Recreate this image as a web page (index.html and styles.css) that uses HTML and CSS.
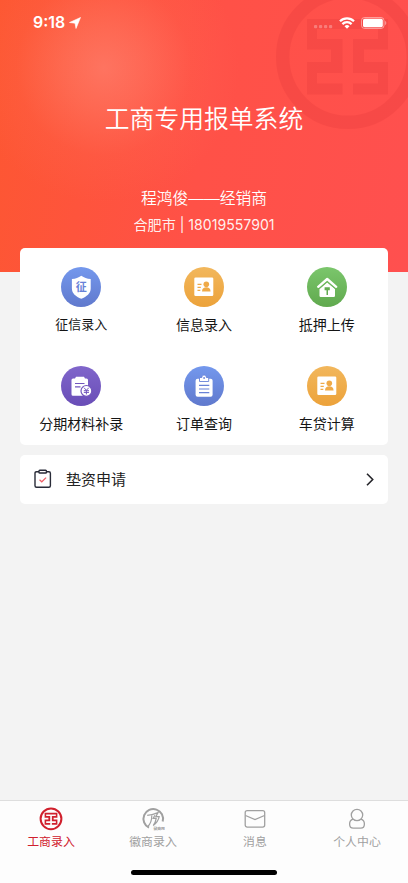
FILE: index.html
```html
<!DOCTYPE html>
<html lang="zh-CN">
<head>
<meta charset="utf-8">
<meta name="viewport" content="width=device-width, initial-scale=1">
<title>工商专用报单系统</title>
<link rel="stylesheet" href="styles.css">
</head>
<body>
<svg class="defs" width="0" height="0" aria-hidden="true">
  <defs>
    <path id="emblem" d="M32 35H113V65.5H89V78H113V110.5H78V99.5H103V89H78V55H103V45H42V55H67.5V89H42V99.5H67.5V110.5H32V78H56V65.5H32Z"/>
    <g id="card">
      <rect x="10.3" y="10.5" width="19" height="18.5" rx="1.3" fill="#fff"/>
      <path d="M13.5 17.3h4M13.5 20.3h3.3M13.5 23.4h2.8" stroke="#efaa48" stroke-width="1.2"/>
      <circle cx="22.3" cy="17.3" r="2.8" fill="#efaa48"/>
      <path d="M18 24.500c0-3 2-4.200 4.300-4.200s4.300 1.200 4.300 4.200z" fill="#efaa48"/>
    </g>
  </defs>
</svg>
<div class="app">
  <header class="hero">
    <svg class="watermark" viewBox="0 0 146 146">
      <circle cx="73" cy="73" r="65.3" fill="none" stroke="currentColor" stroke-width="13.4"/>
      <use href="#emblem" fill="currentColor"/>
    </svg>
    <div class="status">
      <div class="clock"><span>9:18</span>
        <svg width="12" height="12" viewBox="0 0 12 12"><path d="M11.500.5 7 11.500 6 6.200.5 5.500z" fill="#fff" stroke="#fff" stroke-width=".6" stroke-linejoin="round"/></svg>
      </div>
      <div class="signals">
        <svg class="dots" width="20" height="4" viewBox="0 0 20 4"><g fill="#fff" opacity=".28"><rect x="1" width="3.2" height="3.2" rx="1"/><rect x="6" width="3.2" height="3.2" rx="1"/><rect x="11" width="3.2" height="3.2" rx="1"/><rect x="16" width="3.2" height="3.2" rx="1"/></g></svg>
        <svg width="16" height="12" viewBox="0 0 16 12"><g fill="none" stroke="#fff" stroke-width="2.200"><path d="M1 4.200a10 10 0 0 1 14 0M3.400 7.100a6.500 6.500 0 0 1 9.200 0"/></g><path d="M5.500 9.200a3.600 3.600 0 0 1 5 0L8 11.800z" fill="#fff"/></svg>
        <svg width="26" height="12" viewBox="0 0 26 12"><rect x=".5" y=".5" width="22.5" height="11" rx="3" fill="none" stroke="#fff" opacity=".45"/><rect x="2" y="1.800" width="19.800" height="8.400" rx="1.600" fill="#fff"/><path d="M24.2 4c1.4.4 1.4 3.6 0 4z" fill="#fff" opacity=".5"/></svg>
      </div>
    </div>
    <h1>工商专用报单系统</h1>
    <p class="name">程鸿俊——经销商</p>
    <p class="phone">合肥市 | 18019557901</p>
  </header>
  <main>
    <section class="menu">
      <a class="item small"><span class="disc blue"><svg viewBox="0 0 40 40"><path d="M20.3 8.8c3 2 5.500 3 9.400 3.200v9.500c0 5-4 8-9.400 10.300-5.400-2.300-9.400-5.300-9.400-10.300V12c3.900-.2 6.400-1.200 9.400-3.200z" fill="#fff"/><text x="20.300" y="24.300" text-anchor="middle" class="seal">征</text></svg></span>征信录入</a>
      <a class="item"><span class="disc orange"><svg viewBox="0 0 40 40"><use href="#card"/></svg></span>信息录入</a>
      <a class="item"><span class="disc green"><svg viewBox="0 0 40 40"><path d="M20.200 15.500 28 22v6.800q0 1.200-1.200 1.200H13.700q-1.200 0-1.200-1.200V22z" fill="#fff"/><path d="m11.200 19.800 9-7.800 9 7.800" fill="none" stroke="#fff" stroke-width="2.400" stroke-linecap="round" stroke-linejoin="round"/><path d="m12.500 21.500 7.700-6.700 7.700 6.700" fill="none" stroke="#6bb65b" stroke-width=".7"/><path d="M17.600 20.300h5.200v3h-5.200zM19.500 23h1.500v5h-1.500z" fill="#62ac51"/></svg></span>抵押上传</a>
      <a class="item"><span class="disc purple"><svg viewBox="0 0 40 40"><path d="M10.500 14q0-1.500 1.500-1.500h2l1-1.700h8l1 1.700h1.500q1.500 0 1.500 1.500v15.700H12q-1.500 0-1.500-1.500z" fill="#fff"/><path d="M14 17.500h9.500M14 20.800h5.500" stroke="#7256bd" stroke-width="1.200"/><circle cx="25.400" cy="24.900" r="5.400" fill="#fff" stroke="#7256bd" stroke-width="1.200"/><path d="m23 21.700 2.400 2.600 2.400-2.600M22.800 24.700H28M22.800 26.400H28M25.400 24.300v4.100" fill="none" stroke="#7256bd" stroke-width="1"/></svg></span>分期材料补录</a>
      <a class="item"><span class="disc blue"><svg viewBox="0 0 40 40"><rect x="11.600" y="12.700" width="17" height="18" rx="2" fill="#fff"/><path d="M15.500 11.500h2.300c.4-3.300 4.200-3.300 4.600 0h2.300v4h-9.200z" fill="#fff" stroke="#6882d7" stroke-width=".9"/><circle cx="20.100" cy="12" r=".9" fill="#6882d7"/><path d="M15 19.300h10.300M15 23h10.300M15 26.700h10.300" stroke="#6882d7" stroke-width="1.200"/></svg></span>订单查询</a>
      <a class="item"><span class="disc orange"><svg viewBox="0 0 40 40"><use href="#card"/></svg></span>车贷计算</a>
    </section>
    <a class="row">
      <svg width="18" height="20" viewBox="0 0 18 20"><g fill="none" stroke="#292b38" stroke-width="1.400"><path d="M5 2.700H2.500q-1.500 0-1.500 1.500v12.600q0 1.500 1.500 1.500h12.400q1.500 0 1.500-1.500V4.200q0-1.500-1.500-1.500h-2.500"/><rect x="5" y="1.200" width="7.400" height="2.800" rx=".8"/></g><path d="m5.500 10.700 2.300 2.100 4.300-4.200" fill="none" stroke="#ef6068" stroke-width="1.200"/></svg>
      <span>垫资申请</span>
      <svg class="chevron" width="8" height="13" viewBox="0 0 8 13"><path d="m1 .8 5.700 5.700L1 12.200" fill="none" stroke="#26262b" stroke-width="1.600"/></svg>
    </a>
  </main>
  <nav class="tabs">
    <a class="tab active"><svg viewBox="0 0 24 24"><circle cx="12" cy="11.800" r="10.400" fill="none" stroke="currentColor" stroke-width="2"/><use href="#emblem" fill="currentColor" transform="translate(.55 .3) scale(.158)"/></svg>工商录入</a>
    <a class="tab"><svg viewBox="0 0 24 24"><path d="M8 20.700A9.800 9.800 0 1 1 21.700 14.500" fill="none" stroke="currentColor" stroke-width="2"/><path d="M6.200 8.300c4.300 0 6.300-.8 10.800-2.700l-2.200 4h3.400c-.8 4-3 6.700-6 9 1.800-2.700 2.700-4.600 3-7.200h-3l1.600-3.200M10.800 8.500c0 4-1.300 8.300-4 11" fill="none" stroke="currentColor" stroke-width="1.200"/><text x="12.500" y="22.600" class="tiny">徽商网</text></svg>徽商录入</a>
    <a class="tab"><svg viewBox="0 0 24 24"><rect x="2.200" y="3.600" width="19.500" height="16.500" rx="2" fill="none" stroke="currentColor" stroke-width="1.300"/><path d="m2.500 8.500 9.500 4 9.500-4" fill="none" stroke="currentColor" stroke-width="1.300"/></svg>消息</a>
    <a class="tab"><svg viewBox="0 0 24 24"><g fill="none" stroke="currentColor" stroke-width="1.300"><circle cx="12" cy="8" r="5.700"/><path d="M8 12.200c-2.300.8-3.400 2.400-3.400 4.800 0 2.700 1.300 4.200 3.700 4.200h7.400c2.400 0 3.700-1.500 3.700-4.200 0-2.400-1.100-4-3.400-4.800"/></g></svg>个人中心</a>
    <span class="home"></span>
  </nav>
</div>
</body>
</html>
```
FILE: styles.css
```css
* { box-sizing: border-box; }
body {
  margin: 0;
  font-family: Inter, "Noto Sans CJK SC", sans-serif;
  background: #f3f3f3;
}
.defs { position: absolute; }
.app {
  height: 883px;
  display: flex;
  flex-direction: column;
  overflow: hidden;
}
.hero {
  position: relative;
  flex: none;
  height: 272px;
  overflow: hidden;
  color: #fff;
  text-align: center;
  background:
    radial-gradient(circle 135px at 104px 68px, rgba(255, 150, 135, .48), rgba(255, 142, 124, .35) 30%, rgba(255, 120, 100, .13) 65%, rgba(255, 90, 70, 0)),
    linear-gradient(100deg, #fd5731 0%, #ff5147 50%, #ff504f 100%);
}
.watermark {
  position: absolute;
  left: 274.5px;
  top: -16px;
  width: 146px;
  height: 146px;
  color: #e93d3d;
  opacity: .32;
}
.status {
  position: relative;
  display: flex;
  justify-content: space-between;
  height: 44px;
  padding: 14px 21px 0 33px;
}
.clock, .signals { display: flex; height: 17px; align-items: center; }
.clock { gap: 4px; font-size: 15.9px; font-weight: 600; }
.signals { gap: 6px; }
.dots { margin-top: 9px; }
h1, p { position: relative; margin: 0; }
h1 {
  margin-top: 57px;
  font-size: 24.8px;
  line-height: 36px;
  font-weight: 350;
}
.name {
  margin-top: 50px;
  font-size: 15.75px;
  line-height: 24px;
  font-weight: 350;
}
.phone {
  margin-top: 4px;
  font-size: 14.1px;
  line-height: 20px;
  font-weight: 400;
  color: rgba(255, 255, 255, .93);
}
main {
  flex: 1;
  margin-top: -24.5px;
  padding: 0 20px;
  position: relative;
}
.menu {
  height: 197px;
  padding-top: 19.5px;
  display: grid;
  grid-template-columns: repeat(3, 1fr);
  grid-template-rows: 98.5px 78px;
  border-radius: 5px;
  background: #fff;
}
.item {
  display: flex;
  flex-direction: column;
  align-items: center;
  gap: 7px;
  font-size: 14px;
  line-height: 22px;
  color: #151515;
  white-space: nowrap;
}
.small { font-size: 13px; gap: 6px; }
.disc { width: 40px; height: 40px; border-radius: 50%; }
.disc svg { display: block; }
.blue { background: linear-gradient(#7498ed, #6079cd); }
.orange { background: linear-gradient(#f2b75c, #eca23a); }
.green { background: linear-gradient(#7bc66c, #60a94e); }
.purple { background: linear-gradient(#8066cb, #694db7); }
.seal { font-size: 11px; font-weight: 700; fill: #6882d7; }
.row {
  height: 49px;
  margin-top: 10px;
  padding: 0 14px;
  display: flex;
  align-items: center;
  border-radius: 5px;
  background: #fff;
  color: #222;
  font-size: 15px;
}
.row span { margin: -2px 0 0 14px; }
.chevron { margin-left: auto; }
.tabs {
  position: relative;
  flex: none;
  height: 83px;
  padding-top: 6px;
  display: grid;
  grid-template-columns: repeat(4, 1fr);
  border-top: 1px solid #dedede;
  background: #fdfdfd;
}
.tab {
  display: flex;
  flex-direction: column;
  align-items: center;
  gap: 2px;
  font-size: 11.9px;
  line-height: 18px;
  color: #a0a0a0;
}
.tab svg { width: 24px; height: 24px; }
.active { color: #d0202d; }
.tiny { font-size: 3.8px; fill: currentColor; font-weight: 700; }
.home {
  position: absolute;
  left: 131px;
  bottom: 8px;
  width: 146px;
  height: 5px;
  border-radius: 3px;
  background: #000;
}
```
